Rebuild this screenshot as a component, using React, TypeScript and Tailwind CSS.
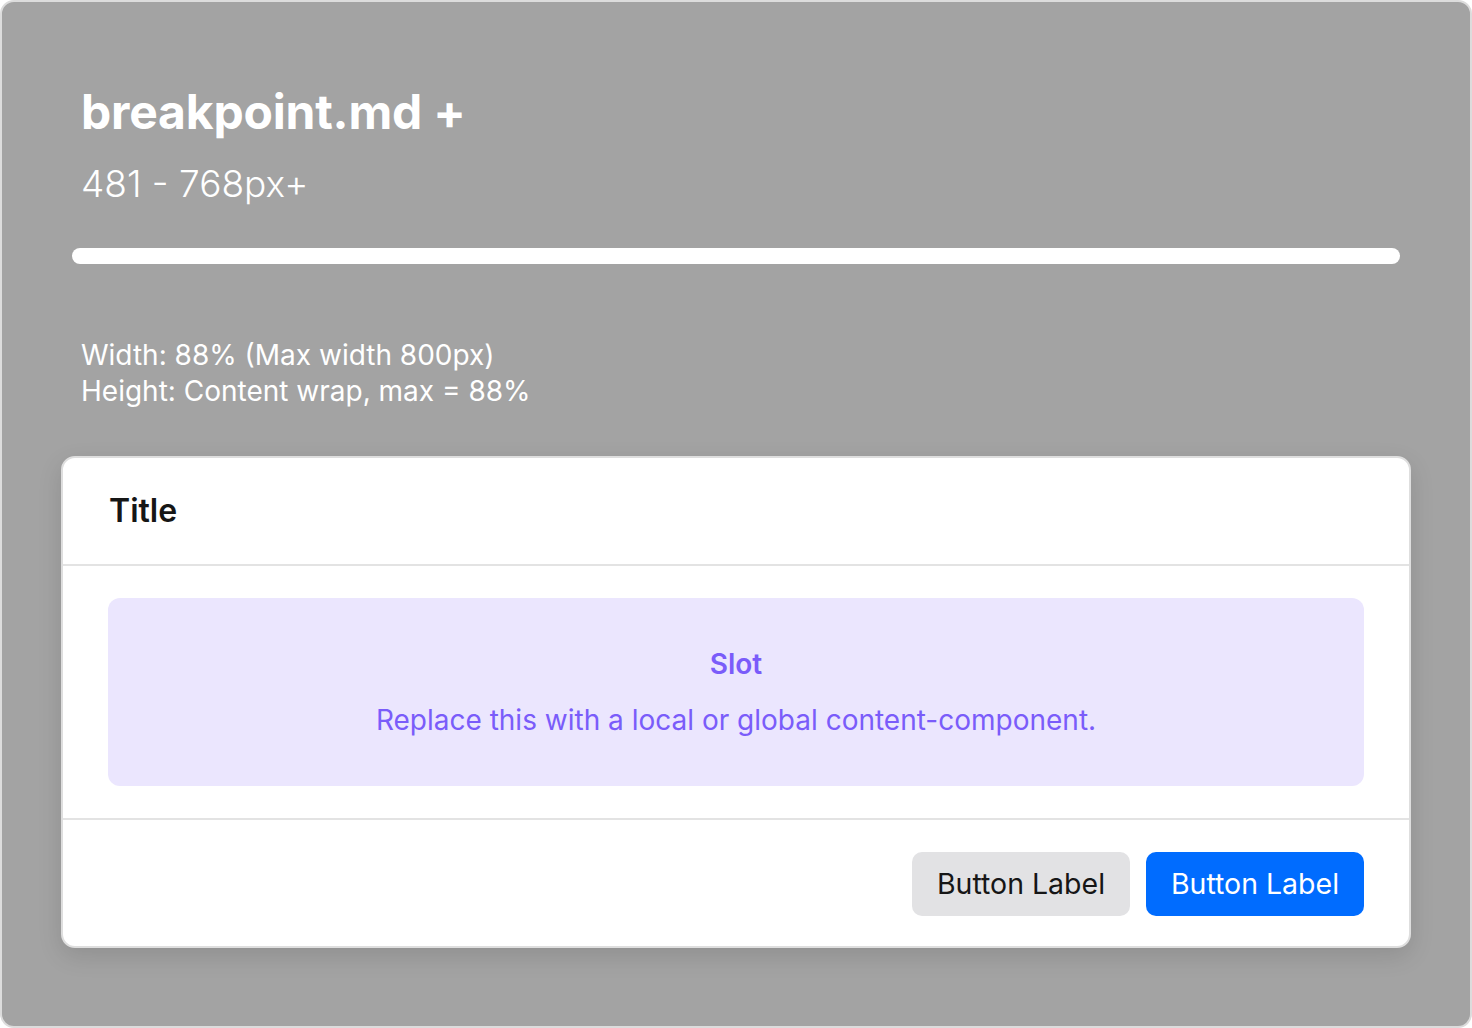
export default function App() {
  return (
    <div className="w-[1472px] h-[1028px] bg-white" style={{ fontFamily: "Inter, 'Noto Sans', sans-serif" }}>
      <div className="h-full w-full rounded-[14px] border-2 border-[#dcdcdc] bg-[#a3a3a3] flex flex-col">
        <div className="pl-[79px] pt-[82px]">
          <h1 className="text-[48px] font-bold leading-[56px] text-white tracking-[-0.2px]">breakpoint.md +</h1>
          <p className="mt-[22px] text-[37px] font-light leading-[44px] text-white">481 - 768px+</p>
        </div>
        <div className="mx-[70px] mt-[42px] h-[16px] rounded-full bg-white" />
        <div className="pl-[79px] mt-[73px] text-[28px] leading-[36px] text-white">
          <p>Width: 88% (Max width 800px)</p>
          <p>Height: Content wrap, max = 88%</p>
        </div>
        <div className="mx-[59px] mt-[47px] rounded-[14px] border-2 border-[#dedede] bg-white shadow-[0_8px_24px_rgba(0,0,0,0.12)]">
          <div className="h-[108px] flex items-center pl-[46px] border-b-2 border-[#e3e3e3]">
            <span className="text-[32px] font-semibold text-[#161616]">Title</span>
          </div>
          <div className="px-[45px] py-[32px] border-b-2 border-[#e3e3e3]">
            <div className="h-[188px] rounded-[12px] bg-[#ebe6fe] flex flex-col items-center justify-center">
              <span className="text-[28px] font-semibold leading-[36px] text-[#7a5cfa]">Slot</span>
              <span className="mt-[20px] text-[28px] leading-[36px] text-[#7a5cfa]">Replace this with a local or global content-component.</span>
            </div>
          </div>
          <div className="flex justify-end gap-[16px] px-[45px] pt-[32px] pb-[30px]">
            <button className="h-[64px] w-[218px] rounded-[10px] bg-[#e2e2e4] text-[28.5px] text-[#161616]">Button Label</button>
            <button className="h-[64px] w-[218px] rounded-[10px] bg-[#006cff] text-[28.5px] text-white">Button Label</button>
          </div>
        </div>
      </div>
    </div>
  );
}
